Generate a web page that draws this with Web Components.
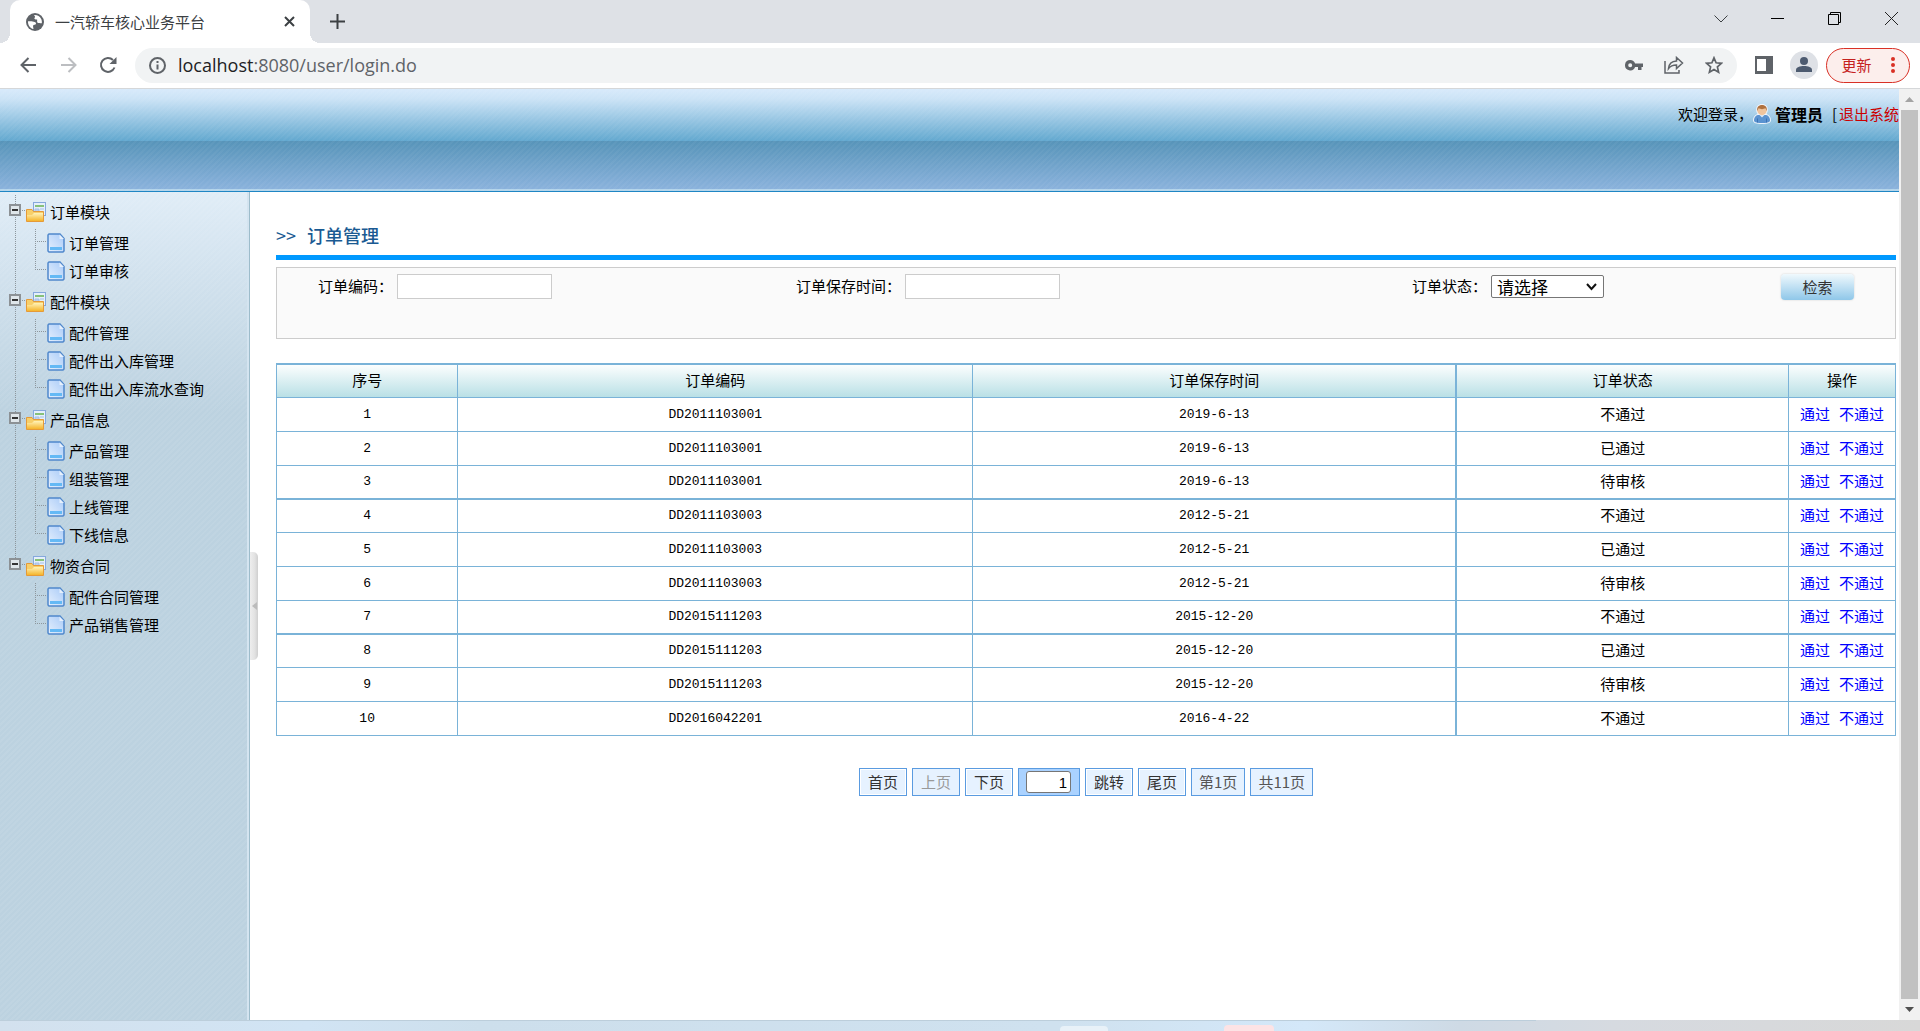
<!DOCTYPE html>
<html lang="zh-CN">
<head>
<meta charset="utf-8">
<title>一汽轿车核心业务平台</title>
<style>
html, body { height: 100%; }
body {
  margin: 0; display: flex; flex-direction: column; overflow: hidden; background: #fff; color: #000;
  font: 15px/20px "Noto Sans CJK SC", sans-serif;
}
.view { flex: 1; min-height: 0; display: flex; }
.page { flex: 1; min-width: 0; display: flex; flex-direction: column; }
.work { flex: 1; min-height: 0; display: flex; }
</style>
</head>
<body>
<browser-tabs>一汽轿车核心业务平台</browser-tabs>
<browser-toolbar></browser-toolbar>
<div class="view">
  <div class="page">
    <app-header user="管理员">欢迎登录，</app-header>
    <div class="work">
      <nav-tree>
        <tree-group label="订单模块">
          <tree-leaf>订单管理</tree-leaf>
          <tree-leaf>订单审核</tree-leaf>
        </tree-group>
        <tree-group label="配件模块">
          <tree-leaf>配件管理</tree-leaf>
          <tree-leaf>配件出入库管理</tree-leaf>
          <tree-leaf>配件出入库流水查询</tree-leaf>
        </tree-group>
        <tree-group label="产品信息">
          <tree-leaf>产品管理</tree-leaf>
          <tree-leaf>组装管理</tree-leaf>
          <tree-leaf>上线管理</tree-leaf>
          <tree-leaf>下线信息</tree-leaf>
        </tree-group>
        <tree-group label="物资合同">
          <tree-leaf>配件合同管理</tree-leaf>
          <tree-leaf>产品销售管理</tree-leaf>
        </tree-group>
      </nav-tree>
      <side-handle></side-handle>
      <order-page heading="订单管理">
        <order-search></order-search>
        <order-table></order-table>
        <page-bar></page-bar>
      </order-page>
    </div>
  </div>
  <scroll-rail></scroll-rail>
</div>
<task-strip></task-strip>

<script>
const define = (name, markup, setup) => customElements.define(name, class extends HTMLElement {
  constructor() {
    super();
    this.attachShadow({ mode: 'open' });
  }
  connectedCallback() {
    if (this.shadowRoot.childNodes.length) return;
    this.shadowRoot.innerHTML = typeof markup === 'function' ? markup(this) : markup;
    if (setup) setup(this, this.shadowRoot);
  }
});

const reset = `:host,*{box-sizing:border-box} button,input,select{font:inherit;color:inherit;margin:0}
  .plain{border:0;background:none;padding:0;display:flex;align-items:center;justify-content:center} svg{display:block;flex:none}`;

define('browser-tabs', `
<style>${reset}
:host { display: flex; height: 43px; flex: none; background: #dee1e6; padding-left: 10px; color: #3c4043; }
.tab { position: relative; width: 300px; background: #fff; border-radius: 10px 10px 0 0; display: flex; align-items: center; padding: 0 11px 0 16px; gap: 11px; }
.tab::before, .tab::after { content: ""; position: absolute; bottom: 0; width: 10px; height: 10px; }
.tab::before { left: -10px; background: radial-gradient(circle at 0 0, transparent 10px, #fff 10px); }
.tab::after { right: -10px; background: radial-gradient(circle at 100% 0, transparent 10px, #fff 10px); }
.name { flex: 1; }
.new { width: 54px; }
.win { margin-left: auto; display: flex; height: 37px; }
.win button { width: 57px; }
</style>
<div class="tab">
  <svg width="18" height="18" viewBox="0 0 18 18"><circle cx="9" cy="9" r="9" fill="#5f6368"/><path d="M2 8.200c1.800.2 3.200-.1 4.600.3 1.600.4 2.700.2 3.300 1.400.5 1-.6 1.700-1.600 1.900-1.200.2-1.300 1-1.200 2 .1.900.5 1.500.3 2.300C4 15.200 1.800 12 2 8.200zM8 2.100c3-.4 5.800 1.100 7.200 3.900.7 1.500.8 3 .6 4.200-.9.200-1.500-.4-2.600-.3-1.200.1-2-.4-2.100-1.500-.1-.9.500-1.400-.2-1.800-.8-.4-1.700.1-2.300-.6-.6-.8.300-1.300.4-2.100.1-.7-.6-1.100-1-1.800z" fill="#fff"/></svg>
  <span class="name"><slot></slot></span>
  <button class="plain" aria-label="关闭标签页" style="width:20px;height:20px"><svg width="11" height="11" stroke="#3c4043" stroke-width="2"><path d="M1 1l9 9M10 1L1 10"/></svg></button>
</div>
<button class="plain new" aria-label="新标签页"><svg width="15" height="15" stroke="#3c4043" stroke-width="2"><path d="M7.500 0v15M0 7.500h15"/></svg></button>
<div class="win">
  <button class="plain" aria-label="搜索标签页"><svg width="14" height="8" fill="none" stroke="#3c4043"><path d="M.5.5L7 7 13.500.5"/></svg></button>
  <button class="plain" aria-label="最小化"><svg width="13" height="1"><path d="M0 0h13v1H0z"/></svg></button>
  <button class="plain" aria-label="还原"><svg width="13" height="13" fill="none" stroke="#000"><path d="M.5 2.500h10v10H.5zM2.500 2.500v-2h10v10h-2"/></svg></button>
  <button class="plain" aria-label="关闭"><svg width="13" height="13" stroke="#222"><path d="M0 0l13 13M13 0L0 13"/></svg></button>
</div>`);

define('browser-toolbar', `
<style>${reset}
:host { display: flex; height: 46px; flex: none; align-items: center; background: #fff; border-bottom: 1px solid #d5d7d9; padding: 0 10px 1px 8px; }
.nav { width: 40px; height: 35px; }
.omni { flex: 1; height: 35px; margin-left: 7px; border-radius: 18px; background: #f1f3f4; display: flex; align-items: center; padding: 0 3px 0 14px; }
.omni a { flex: 1; margin-left: 12px; color: #5f6368; text-decoration: none; font: 18px/24px "Open Sans", sans-serif; }
.omni b { font-weight: 400; color: #202124; }
.side { width: 36px; margin-left: 9px; }
.face { width: 28px; height: 28px; border-radius: 50%; background: #dee1e6; margin: 0 8px; overflow: hidden; }
.up { width: 84px; height: 35px; border: 1px solid #d93025; border-radius: 18px; background: #fceeec; color: #c5221f; gap: 19px; }
.omni .i { width: 40px; height: 35px; }
</style>
<button class="plain nav" aria-label="后退"><svg width="17" height="16" fill="none" stroke="#5f6368" stroke-width="2"><path d="M16 8H2M8.500 1L1.500 8l7 7"/></svg></button>
<button class="plain nav" aria-label="前进"><svg width="17" height="16" fill="none" stroke="#bcbec1" stroke-width="2"><path d="M1 8h14M8.500 1l7 7-7 7"/></svg></button>
<button class="plain nav" aria-label="刷新"><svg width="18" height="18" fill="none" stroke="#5f6368" stroke-width="2"><path d="M15.500 11.500A7 7 0 1 1 14 4"/><path d="M17.500 1v7h-7z" fill="#5f6368" stroke="none"/></svg></button>
<div class="omni">
  <svg width="17" height="17" fill="none" stroke="#5f6368" stroke-width="2"><circle cx="8.500" cy="8.500" r="7.500"/><path d="M8.500 7.500v5M8.500 4v2"/></svg>
  <a href="#"><b>localhost</b>:8080/user/login.do</a>
  <button class="plain i" aria-label="密码"><svg width="18" height="11" fill="#5f6368"><path fill-rule="evenodd" d="M5.200 0a5.200 5.200 0 0 1 4.900 3.500H18V7h-1.500v3h-3.500V7h-2.900A5.200 5.200 0 1 1 5.200 0zm0 3.200a2 2 0 1 0 0 4 2 2 0 0 0 0-4z"/></svg></button>
  <button class="plain i" aria-label="分享"><svg width="20" height="18" fill="none" stroke="#5f6368" stroke-width="1.500"><path d="M1 5v12h14v-3"/><path d="M4.500 12.500c.5-5 3.500-7.300 8-7.500V1.500l6 5.500-6 5.500V9c-3.500 0-6 .8-8 3.500z"/></svg></button>
  <button class="plain i" aria-label="收藏"><svg width="18" height="18" viewBox="0 0 18 18" fill="none" stroke="#5f6368" stroke-width="1.700"><path d="M9 1.800l2.100 5 5.400.5-4.100 3.600 1.200 5.300L9 13.400l-4.600 2.800 1.200-5.300L1.500 7.300l5.400-.5z"/></svg></button>
</div>
<button class="plain side" aria-label="侧边栏"><svg width="18" height="18"><path fill="#5f6368" fill-rule="evenodd" d="M0 0h18v18H0zM2 3v12h9V3z"/></svg></button>
<button class="plain face" aria-label="账户"><svg width="28" height="28" fill="#4d5b70"><circle cx="14" cy="10" r="4"/><path d="M6 21v-2c0-3 4-4 8-4s8 1 8 4v2z"/></svg></button>
<button class="plain up"><span>更新</span><svg width="4" height="16" fill="#d93025"><circle cx="2" cy="2" r="2"/><circle cx="2" cy="8" r="2"/><circle cx="2" cy="14" r="2"/></svg></button>`);

define('app-header', el => `
<style>${reset}
:host { display: flex; justify-content: flex-end; height: 103px; flex: none; overflow: hidden; white-space: nowrap; border-bottom: 1px solid #1f86c4;
  background: repeating-linear-gradient(135deg, rgba(255,255,255,.04) 0 2px, transparent 2px 4px),
    linear-gradient(#d8eafb 0, #cbe3f6 10px, #62a8cf 52px, #5794b9 52px, #8ab2dc 100px, #b3d4ea 100px); }
.who { display: flex; align-items: center; height: 20px; margin-top: 15px; }
svg { margin-right: 4px; }
b { font-size: 16px; font-weight: 700; margin-right: 9px; }
a { color: #c00; text-decoration: none; margin-left: 2px; }
</style>
<div class="who"><span><slot></slot></span>
<svg width="18" height="20" viewBox="0 0 18 20"><path d="M9 0C5 0 3 2.500 3.200 6c.1 2 .8 3 1.300 4C1.500 11 0 13.500 0 16.500 0 19 3.500 20 9 20s9-1 9-3.500c0-3-1.500-5.500-4.500-6.500.5-1 1.200-2 1.300-4C15 2.500 13 0 9 0z" fill="#eef4fb"/><path d="M1 16.500c0-3.500 2-5.500 5-5.500h6c3 0 5 2 5 5.500 0 2-4 2.500-8 2.500s-8-.5-8-2.500z" fill="#5b93d0"/><path d="M6.500 11l2.500 2.500 2.500-2.500z" fill="#d9e9f9"/><path d="M4.500 14.500v4M13.500 14.500v4" stroke="#3c73b4"/><circle cx="9" cy="6.500" r="4.700" fill="#efc49d"/><path d="M4.200 7C3.500 2.500 6.500 1 9 1s5.500 1.500 4.800 6L12.500 4.300 9 5.200 5.500 4.300z" fill="#b0713f"/></svg>
<b>${el.getAttribute('user')}</b><span>[</span><a href="#">退出系统</a></div>`);

define('nav-tree', `
<style>
:host { display: block; box-sizing: border-box; width: 250px; flex: none; padding-top: 3px; border-right: 1px solid #9dbccb; box-shadow: inset -2px 0 #d4e4f0;
  background: repeating-linear-gradient(135deg, rgba(255,255,255,.06) 0 2px, transparent 2px 4px), linear-gradient(#e0edf7 0, #d2e2ee 80px, #bcd2e0 220px); }
</style>
<nav><slot></slot></nav>`);

define('tree-group', el => `
<style>${reset}
:host { display: block; background: repeating-linear-gradient(#8d969c 0 1px, transparent 1px 2px) 15px 0 / 1px 100% no-repeat; }
:host(:last-child) { background-size: 1px 15px; }
.head { display: flex; align-items: center; height: 34px; padding-left: 9px; }
.folder { margin-right: 4px; }
</style>
<div class="head">
  <button class="plain" aria-label="折叠" aria-expanded="true"><svg width="17" height="34"><path d="M13 15.500h4" stroke="#8d969c" stroke-dasharray="1 1"/><rect x="1" y="10" width="10" height="10" fill="#dfe6ea" stroke="#8c9195" stroke-width="2"/><path d="M3 15h6" stroke="#333" stroke-width="2"/></svg></button>
  <svg class="folder" width="20" height="20"><defs><linearGradient id="g" x2="0" y2="1"><stop stop-color="#fff3b8"/><stop offset="1" stop-color="#f5b52c"/></linearGradient></defs><rect x="7.500" y=".5" width="12" height="13" fill="#e5effb" stroke="#86a8dc"/><path d="M9 3h9v2H9z" fill="#86c17a"/><path d="M9 7h4v4H9zM14 7h4M14 10h4" fill="#bcd0ee" stroke="#a5bfe6"/><path d="M.5 7.500h5.500l1.500 2h10v10H.5z" fill="#f7cf6a" stroke="#e59a38"/><path d="M1 13h5l2-2h9v8H1z" fill="url(#g)"/></svg>
  <span>${el.getAttribute('label')}</span>
</div>
<slot></slot>`, (el, root) => {
  const toggle = root.querySelector('button'), leaves = root.querySelector('slot');
  toggle.onclick = () => {
    const open = toggle.getAttribute('aria-expanded') !== 'true';
    toggle.setAttribute('aria-expanded', open);
    leaves.style.display = open ? '' : 'none';
  };
});

define('tree-leaf', `
<style>${reset}
:host { display: flex; align-items: center; height: 28px; padding-left: 35px;
  background: repeating-linear-gradient(#8d969c 0 1px, transparent 1px 2px) 35px 0 / 1px 100% no-repeat; }
:host(:last-child) { background-size: 1px 13px; }
a { display: flex; align-items: center; color: inherit; text-decoration: none; gap: 4px; }
</style>
<svg width="12" height="28"><path d="M0 12.500h12" stroke="#8d969c" stroke-dasharray="1 1"/></svg>
<a href="#"><svg width="18" height="20"><defs><linearGradient id="p" x1="1" x2="0" y2="1"><stop stop-color="#a9cbf8"/><stop offset="1" stop-color="#e6f0fd"/></linearGradient></defs><path d="M2 1h11l4 4.500v12.500L16 19H2L1 18V2z" fill="url(#p)" stroke="#5088cc" stroke-width="1.500"/><path d="M12.500 1.500V6H17z" fill="#e6f0fd"/><path d="M3 14h12v3H3z" fill="#64b9f5"/></svg><span><slot></slot></span></a>`);

define('side-handle', `
<style>
:host { display: block; width: 8px; flex: none; align-self: center; }
button { display: flex; align-items: center; justify-content: center; width: 8px; height: 108px; padding: 0; border: 0; border-radius: 0 5px 5px 0; background: linear-gradient(90deg, #eee, #e2e2e2 60%, #cfcfcf); }
</style>
<button aria-label="收起菜单"><svg width="5" height="8"><path d="M5 0v8L0 4z" fill="#bbb"/></svg></button>`);

define('order-page', el => `
<style>
:host { display: block; flex: 1; min-width: 0; padding: 26px 3px 0 18px; }
h1 { margin: 0 0 7px; padding-bottom: 2px; display: flex; gap: 11px; border-bottom: 5px solid #0099ff; color: #1a5a92; font-size: 18px; line-height: 35px; font-weight: 500; }
h1 span { font-weight: 400; }
</style>
<h1><span>&gt;&gt;</span>${el.getAttribute('heading')}</h1>
<slot></slot>`);

define('order-search', `
<style>${reset}
:host { display: block; border: 1px solid #ccc; background: #fafafa; padding: 6px 0 38px 41px; }
form { display: grid; grid-template-columns: 478fr 616fr 369fr 114fr; }
.field { display: flex; align-items: flex-start; height: 26px; gap: 4px; }
label { line-height: 24px; }
input { width: 155px; height: 25px; border: 1px solid #ccc; background: #fff; padding: 0 4px; }
.pick { display: grid; align-items: center; margin-top: 1px; }
.pick > * { grid-area: 1 / 1; }
.pick svg { justify-self: end; margin-right: 7px; pointer-events: none; }
select { appearance: none; width: 113px; height: 23px; border: 1px solid #767676; border-radius: 2px; background: #fff; padding: 0 20px 0 5px; font-size: 17px; line-height: 20px; }
.go { width: 73px; height: 26px; border: 0; border-radius: 4px; background: linear-gradient(#f0f9fd, #8fc7e9); color: #333; box-shadow: 0 0 2px #ccc; padding: 0; }
</style>
<form onsubmit="return false">
  <div class="field"><label for="code">订单编码：</label><input id="code" type="text"></div>
  <div class="field"><label for="saved">订单保存时间：</label><input id="saved" type="text"></div>
  <div class="field"><label for="state">订单状态：</label><div class="pick"><select id="state"><option>请选择</option><option>不通过</option><option>已通过</option><option>待审核</option></select><svg width="11" height="8" fill="none" stroke="#111" stroke-width="2"><path d="M1 1l4.500 5L10 1"/></svg></div></div>
  <button class="go">检索</button>
</form>`);

const orders = [
  ['DD2011103001', '2019-6-13', '不通过'], ['DD2011103001', '2019-6-13', '已通过'], ['DD2011103001', '2019-6-13', '待审核'],
  ['DD2011103003', '2012-5-21', '不通过'], ['DD2011103003', '2012-5-21', '已通过'], ['DD2011103003', '2012-5-21', '待审核'],
  ['DD2015111203', '2015-12-20', '不通过'], ['DD2015111203', '2015-12-20', '已通过'], ['DD2015111203', '2015-12-20', '待审核'],
  ['DD2016042201', '2016-4-22', '不通过']
];

define('order-table', () => `
<style>${reset}
:host { display: block; margin-top: 24px; }
table { width: 100%; table-layout: fixed; border-collapse: separate; border-spacing: 0; border-top: 2px solid #7ab3d8; border-left: 1px solid #7ab3d8; text-align: center; }
th, td { height: 34px; padding: 0 0 2px; border: 0 solid #7ab3d8; border-width: 0 1px 1px 0; }
th { height: 33px; font-weight: inherit; }
thead tr { background: linear-gradient(#fcfefe, #b7dfe5); }
tbody tr:nth-child(4n+3) td { height: 33px; }
tbody tr:nth-child(4n) td { border-top-width: 1px; }
th:nth-child(3), td:nth-child(3) { border-right-width: 2px; }
.num { font-family: "Liberation Mono", monospace; font-size: 13px; padding-bottom: 0; }
td:last-child { white-space: nowrap; }
a { color: #00f; text-decoration: none; }
a + a { margin-left: 9px; }
</style>
<table>
  <colgroup><col style="width:11.2%"><col style="width:31.8%"><col style="width:29.9%"><col style="width:20.5%"><col></colgroup>
  <thead><tr><th>序号</th><th>订单编码</th><th>订单保存时间</th><th>订单状态</th><th>操作</th></tr></thead>
  <tbody>${orders.map(([code, date, state], i) => `<tr><td class="num">${i + 1}</td><td class="num">${code}</td><td class="num">${date}</td><td>${state}</td><td><a href="#">通过</a><a href="#">不通过</a></td></tr>`).join('')}</tbody>
</table>`);

define('page-bar', `
<style>${reset}
:host { display: flex; justify-content: center; gap: 5px; margin-top: 32px; color: #333; }
button, .info, .jump { height: 28px; padding: 0 8px; border: 1px solid #5a9be0; background: #e6f2ff; }
button { box-shadow: inset 0 0 0 1px #fff; }
button:disabled { color: #999; box-shadow: none; }
.info { line-height: 26px; padding: 0 7px; color: #555; }
.jump { background: #aad2ff; padding: 2px 7px; width: 62px; }
.jump input { display: block; width: 45px; height: 22px; border: 1px solid #767676; border-radius: 3px; padding: 0 3px; text-align: right; color: #000; font: 15px/20px "Liberation Sans", sans-serif; }
</style>
<button>首页</button><button disabled>上页</button><button>下页</button>
<div class="jump"><input type="text" value="1" aria-label="页码"></div>
<button>跳转</button><button>尾页</button><span class="info">第1页</span><span class="info">共11页</span>`);

define('scroll-rail', `
<style>
:host { display: flex; flex-direction: column; width: 21px; flex: none; box-sizing: border-box; padding: 0 2px; background: #f1f1f1; }
.end { height: 21px; display: flex; align-items: center; justify-content: center; }
.thumb { flex: 1; background: #c1c1c1; }
</style>
<div class="end"><svg width="9" height="5"><path d="M0 5l4.500-5L9 5z" fill="#a3a3a3"/></svg></div>
<div class="thumb"></div>
<div class="end"><svg width="9" height="5"><path d="M0 0h9L4.500 5z" fill="#505050"/></svg></div>`);

define('task-strip', `
<style>
:host { display: flex; align-items: flex-end; height: 11px; flex: none; box-sizing: border-box; padding-left: 55.2%; gap: 116px;
  background: linear-gradient(#bccedb, #bccedb) 0 0 / 80% 1px no-repeat, linear-gradient(90deg, #d3e1ee, #d1e4f4 16%, #cddfec 25%, #cfe1ef 55%, #d4e8f9 68%, #cedae5 76%, #d6dae0 84%, #d8d8d8); }
i { width: 48px; height: 5px; border-radius: 4px 4px 0 0; background: #e8f1f8; }
i + i { width: 50px; height: 6px; background: #fde3e5; }
</style>
<i></i><i></i>`);
</script>
</body>
</html>
